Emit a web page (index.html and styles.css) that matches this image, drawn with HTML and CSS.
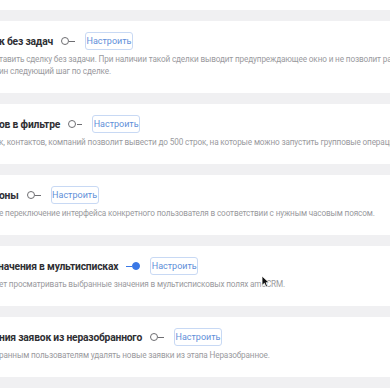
FILE: index.html
```html
<!DOCTYPE html>
<html lang="ru">
<head>
<meta charset="utf-8">
<link rel="stylesheet" href="styles.css">
</head>
<body>
<div class="page">
  <div class="card card-top"></div>

  <div class="card">
    <div class="row">
      <span class="title">к без задач</span>
      <span class="toggle"></span>
      <span class="btn">Настроить</span>
    </div>
    <div class="desc">тавить сделку без задачи. При наличии такой сделки выводит предупреждающее окно и не позволит работать</div>
    <div class="desc">ин следующий шаг по сделке.</div>
  </div>

  <div class="card">
    <div class="row">
      <span class="title">ов в фильтре</span>
      <span class="toggle"></span>
      <span class="btn">Настроить</span>
    </div>
    <div class="desc">к, контактов, компаний позволит вывести до 500 строк, на которые можно запустить групповые операции.</div>
  </div>

  <div class="card">
    <div class="row">
      <span class="title">оны</span>
      <span class="toggle"></span>
      <span class="btn">Настроить</span>
    </div>
    <div class="desc">е переключение интерфейса конкретного пользователя в соответствии с нужным часовым поясом.</div>
  </div>

  <div class="card">
    <div class="row">
      <span class="title title-cut">значения в мультисписках</span>
      <span class="toggle on"></span>
      <span class="btn">Настроить</span>
    </div>
    <div class="desc">ет просматривать выбранные значения в мультисписковых полях amoCRM.</div>
  </div>

  <div class="card">
    <div class="row">
      <span class="title">ния заявок из неразобранного</span>
      <span class="toggle"></span>
      <span class="btn">Настроить</span>
    </div>
    <div class="desc">ранным пользователям удалять новые заявки из этапа Неразобранное.</div>
  </div>

  <div class="card card-bottom"></div>
</div>

<svg class="cursor" width="9" height="13" viewBox="0 0 9 13">
  <path d="M1 1 L1 10.5 L3.4 8.3 L5 12 L6.6 11.3 L5.1 7.7 L8.2 7.7 Z" fill="#111" stroke="#fff" stroke-width="0.8" stroke-linejoin="round"/>
</svg>
</body>
</html>
```

FILE: styles.css
```css
html, body {
  margin: 0;
  padding: 0;
}
body {
  width: 390px;
  height: 390px;
  overflow: hidden;
  background: #f0f0f2;
  font-family: Roboto, "Noto Sans", sans-serif;
  position: relative;
}
.page {
  display: flex;
  flex-direction: column;
  gap: 11px;
  margin-left: -1px;
}
.card {
  background: #ffffff;
  padding: 11px 0 16px 0;
  overflow: hidden;
}
.card-top {
  height: 10px;
  padding: 0;
}
.card-bottom {
  height: 20px;
  padding: 0;
}
.row {
  display: flex;
  align-items: center;
  height: 18px;
  white-space: nowrap;
}
.title {
  font-size: 10.3px;
  font-weight: 700;
  color: #2f2f33;
  letter-spacing: -0.2px;
}
.title-cut {
  margin-left: -6px;
}
.toggle {
  position: relative;
  width: 14px;
  height: 8px;
  margin-left: 8px;
  margin-right: 10px;
  flex: none;
}
.toggle::before {
  content: "";
  position: absolute;
  left: 0;
  top: 0;
  width: 6px;
  height: 6px;
  border: 1.2px solid #6e6e72;
  border-radius: 50%;
  background: #fff;
}
.toggle::after {
  content: "";
  position: absolute;
  left: 8.4px;
  top: 3.5px;
  width: 5.6px;
  height: 1.2px;
  background: #6e6e72;
}
.toggle.on::before {
  left: auto;
  right: 0;
  border-color: #3a78e6;
  background: #3a78e6;
}
.toggle.on::after {
  left: 0;
  background: #3a78e6;
}
.btn {
  flex: none;
  box-sizing: border-box;
  height: 18px;
  width: 48px;
  border: 1px solid #c8d9f4;
  border-radius: 3px;
  color: #5f8fd9;
  font-size: 9px;
  display: flex;
  align-items: center;
  justify-content: center;
  background: #fff;
}
.desc {
  font-size: 8.2px;
  line-height: 12px;
  color: #9a9a9e;
  white-space: nowrap;
  letter-spacing: -0.14px;
}
.row + .desc {
  margin-top: 3px;
}
.cursor {
  position: absolute;
  left: 261px;
  top: 275px;
}
```
